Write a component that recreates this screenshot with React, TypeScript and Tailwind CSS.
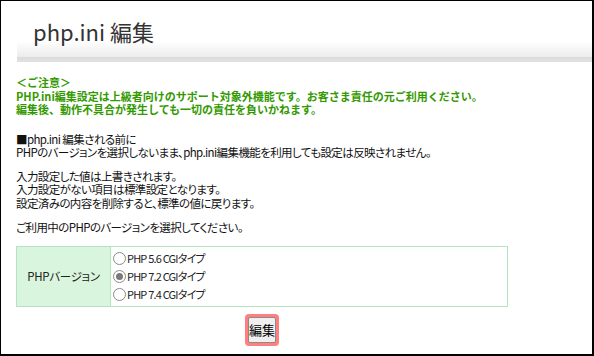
const versions = [
  { id: '56', label: 'PHP 5.6 CGIタイプ' },
  { id: '72', label: 'PHP 7.2 CGIタイプ' },
  { id: '74', label: 'PHP 7.4 CGIタイプ' },
];

const jp = '"Noto Sans CJK JP", "Liberation Sans", sans-serif';

function Radio({ checked }: { checked: boolean }) {
  return (
    <span className="relative inline-block w-[13px] h-[13px] rounded-full border border-[#8a8a8a] bg-white shrink-0">
      {checked && <span className="absolute left-[2px] top-[2px] w-[7px] h-[7px] rounded-full bg-[#7a7a7a]" />}
    </span>
  );
}

export default function App() {
  return (
    <div
      className="w-[594px] h-[356px] bg-white border-black border-l border-t border-r-2 border-b-2 overflow-hidden text-black"
      style={{ fontFamily: jp }}
    >
      {/* Header */}
      <div className="ml-[16px] h-[61px] bg-[linear-gradient(to_bottom,#ffffff_0px,#ffffff_40px,#ececec_56px,#dadada_56px,#e2e2e2_61px)]">
        <h1 className="pl-[16px] pt-[15px] text-[22px] leading-[30px] text-[#333]">php.ini 編集</h1>
      </div>

      <div className="pl-[15px] pt-[14px] w-[507px]">
        {/* Notice */}
        <div className="text-[11px] leading-[13.5px] font-bold text-[#339900] whitespace-nowrap">
          <p>＜ご注意＞</p>
          <p>PHP.ini編集設定は上級者向けのサポート対象外機能です。お客さま責任の元ご利用ください。</p>
          <p>編集後、動作不具合が発生しても一切の責任を負いかねます。</p>
        </div>

        {/* Description */}
        <div className="mt-[16px] text-[11.5px] leading-[13.3px] text-[#111] whitespace-nowrap [font-feature-settings:'palt'] tracking-[-0.6px]">
          <p>■php.ini 編集される前に</p>
          <p>PHPのバージョンを選択しないまま、php.ini編集機能を利用しても設定は反映されません。</p>
          <div className="h-[11px]" />
          <p>入力設定した値は上書きされます。</p>
          <p>入力設定がない項目は標準設定となります。</p>
          <p>設定済みの内容を削除すると、標準の値に戻ります。</p>
          <div className="h-[11px]" />
          <p>ご利用中のPHPのバージョンを選択してください。</p>
        </div>

        {/* Table */}
        <div className="mt-[12px] flex border border-[#b4e4bf] h-[61px] [font-feature-settings:'palt']">
          <div className="w-[94px] shrink-0 bg-[#d9f5de] border-r border-[#b4e4bf] flex items-center justify-center text-[11.5px] text-[#222] tracking-[-0.3px]">
            PHPバージョン
          </div>
          <div className="flex-1 pt-[2px] pl-[2px]">
            {versions.map((v) => (
              <div key={v.id} className="flex items-center h-[18px] text-[11px] text-[#222] tracking-[-0.8px] whitespace-nowrap">
                <Radio checked={v.id === '72'} />
                <span className="ml-[1px]">{v.label}</span>
              </div>
            ))}
          </div>
        </div>

        {/* Submit */}
        <div className="mt-[7px] flex justify-center">
          <div className="p-[3px] bg-[#ff7f7f] rounded-[4px]">
            <button className="w-[28px] h-[26px] p-0 bg-[#efefef] border border-[#8a8a8a] rounded-[2px] text-[13px] leading-[14px] text-black whitespace-nowrap flex items-center justify-center">
              編集
            </button>
          </div>
        </div>
      </div>
    </div>
  );
}
